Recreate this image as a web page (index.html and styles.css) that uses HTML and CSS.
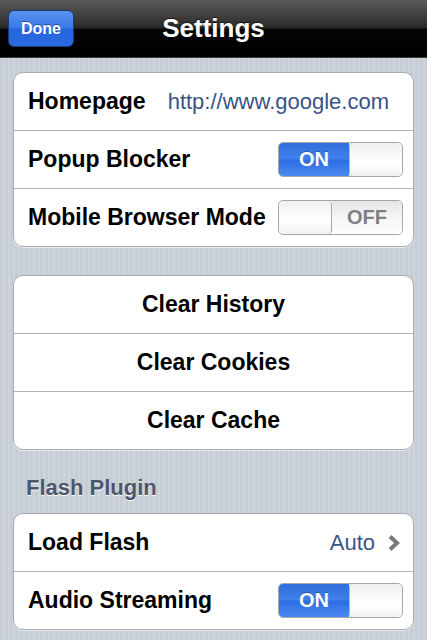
FILE: index.html
```html
<!DOCTYPE html>
<html>
<head>
    <title>Settings</title>
    <link rel="stylesheet" href="styles.css">
</head>
<body>
    <div class="navbar">
        <div class="nav-left">
            <button class="done-btn">Done</button>
        </div>
        <h1>Settings</h1>
        <div></div>
    </div>

    <div class="content">
        <div class="group">
            <div class="row">
                <span class="label">Homepage</span>
                <span class="value url">http://www.google.com</span>
            </div>
            <div class="row">
                <span class="label">Popup Blocker</span>
                <div class="switch on">
                    <span class="track">ON</span>
                    <span class="thumb"></span>
                </div>
            </div>
            <div class="row">
                <span class="label">Mobile Browser Mode</span>
                <div class="switch off">
                    <span class="thumb"></span>
                    <span class="track">OFF</span>
                </div>
            </div>
        </div>

        <div class="group">
            <div class="row center">Clear History</div>
            <div class="row center">Clear Cookies</div>
            <div class="row center">Clear Cache</div>
        </div>

        <div class="section-title">Flash Plugin</div>

        <div class="group">
            <div class="row">
                <span class="label">Load Flash</span>
                <span class="value">
                    Auto
                    <svg class="chevron" width="13" height="18" viewBox="0 0 13 18">
                        <path d="M3 2.5 L10 9 L3 15.5" fill="none" stroke="#7a7a7a" stroke-width="4"/>
                    </svg>
                </span>
            </div>
            <div class="row">
                <span class="label">Audio Streaming</span>
                <div class="switch on">
                    <span class="track">ON</span>
                    <span class="thumb"></span>
                </div>
            </div>
        </div>
    </div>
</body>
</html>
```

FILE: styles.css
```css
body {
    margin: 0;
    width: 427px;
    height: 640px;
    overflow: hidden;
    font-family: "Liberation Sans", Arial, sans-serif;
    background: repeating-linear-gradient(90deg, #c6cdd5 0, #c6cdd5 3px, #ced4db 3px, #ced4db 5px);
}
.navbar {
    height: 57px;
    display: grid;
    grid-template-columns: 1fr auto 1fr;
    align-items: center;
    background: linear-gradient(#5a5a5a 0%, #2a2a2a 48%, #050505 52%, #000 100%);
    border-bottom: 1px solid #3c3c3c;
}
.nav-left {
    padding-left: 8px;
}
.done-btn {
    width: 66px;
    height: 37px;
    border: 1px solid #1a3a78;
    border-radius: 6px;
    background: linear-gradient(#5a93f0 0%, #3b78e6 48%, #2465dc 52%, #2a6be0 100%);
    color: #fff;
    font-family: "Liberation Sans", Arial, sans-serif;
    font-weight: bold;
    font-size: 16px;
    text-shadow: 0 -1px 0 rgba(0, 0, 0, 0.4);
    padding: 0;
}
h1 {
    margin: 0;
    color: #fff;
    font-size: 26px;
    font-weight: bold;
    text-shadow: 0 -1px 0 rgba(0, 0, 0, 0.6);
}
.content {
    padding: 14px 13px 0;
}
.group {
    background-color: #fff;
    border: 1px solid #a8abaf;
    border-radius: 10px;
    margin-bottom: 28px;
    box-shadow: 0 1px 0 rgba(255, 255, 255, 0.6);
}
.row {
    height: 57px;
    display: flex;
    align-items: center;
    justify-content: space-between;
    padding: 0 10px 0 14px;
    border-bottom: 1px solid #b3b3b3;
    font-size: 23px;
    font-weight: bold;
    color: #000;
}
.row:last-child {
    border-bottom: none;
}
.row.center {
    justify-content: center;
    padding: 0;
}
.value {
    display: flex;
    align-items: center;
    gap: 12px;
    font-size: 22px;
    font-weight: normal;
    color: #385487;
    padding-right: 3px;
}
.value.url {
    padding-right: 14px;
}
.switch {
    width: 123px;
    height: 33px;
    display: flex;
    border: 1px solid #a6a6a6;
    border-radius: 5px;
    overflow: hidden;
    font-size: 20px;
    font-weight: bold;
}
.switch .track {
    flex: 1;
    display: flex;
    align-items: center;
    justify-content: center;
}
.switch.on .track {
    color: #fff;
    background: linear-gradient(#2f6fdc 0%, #3f80ea 48%, #2b6ee4 52%, #4a8af0 100%);
    text-shadow: 0 -1px 0 rgba(0, 0, 0, 0.3);
}
.switch.off .track {
    color: #808080;
    background: linear-gradient(#e4e4e4 0%, #f6f6f6 50%, #fdfdfd 100%);
}
.thumb {
    width: 52px;
    background: linear-gradient(#f0f0f0, #ffffff 60%, #f2f2f2);
    border-left: 1px solid #b8b8b8;
    border-radius: 4px;
}
.switch.off .thumb {
    border-left: none;
    border-right: 1px solid #a8a8a8;
}
.section-title {
    margin: -2px 0 13px 13px;
    height: 24px;
    line-height: 24px;
    font-size: 22px;
    font-weight: bold;
    color: #4c566c;
    text-shadow: 0 1px 0 #fff;
}
```
